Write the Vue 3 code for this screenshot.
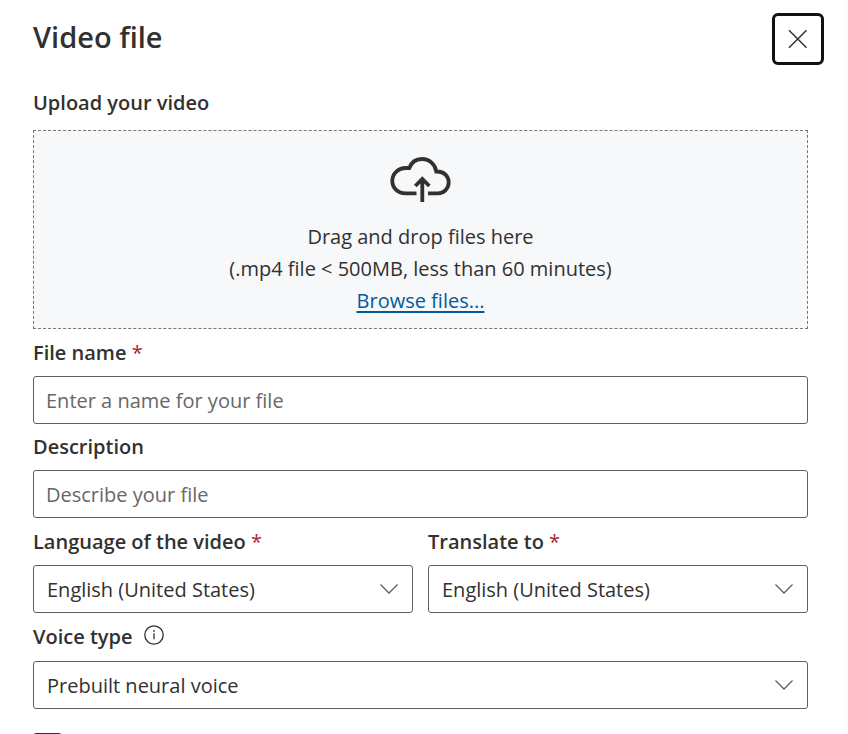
<script setup>
import { ref } from 'vue'

const languages = ['English (United States)', 'English (United Kingdom)', 'German (Germany)', 'Spanish (Spain)']
const voices = ['Prebuilt neural voice', 'Personal voice']

const fileName = ref('')
const description = ref('')
const sourceLanguage = ref(languages[0])
const targetLanguage = ref(languages[0])
const voiceType = ref(voices[0])
const accepted = ref(false)
</script>

<template>
  <main class="panel">
    <header class="header">
      <h1 class="title">Video file</h1>
      <button class="close" type="button" aria-label="Close">
        <svg width="20" height="20" viewBox="0 0 20 20" aria-hidden="true">
          <path d="M1 1.200l17.500 17.500M18.500 1.200l-17.500 17.500" />
        </svg>
      </button>
    </header>

    <form class="form" @submit.prevent>
      <h2 class="label upload-label">Upload your video</h2>
      <section class="dropzone">
        <svg class="cloud" width="62" height="48" viewBox="0 0 62 48" aria-hidden="true">
          <path d="M26.500 38.300H15.500C8 38.300 2.300 33 2.300 26C2.300 18.500 8.500 13 16 13H19.300C21.500 7 26.500 4 32 4C39.500 4 45.300 9.300 46.300 16.500H47.500C54 16.500 58.700 21.300 58.700 27.300C58.700 33.500 54 38.300 48 38.300H38" />
          <path d="M32.300 47V23M25.300 31L32.300 24L39.300 31" />
        </svg>
        <p>Drag and drop files here</p>
        <p>(.mp4 file &lt; 500MB, less than 60 minutes)</p>
        <p><a href="#">Browse files...</a></p>
      </section>

      <div class="field">
        <label class="label" for="file-name">File name <span class="required">*</span></label>
        <input id="file-name" v-model="fileName" class="control" type="text" placeholder="Enter a name for your file" />
      </div>

      <div class="field">
        <label class="label compact" for="description">Description</label>
        <input id="description" v-model="description" class="control" type="text" placeholder="Describe your file" />
      </div>

      <div class="row">
        <div class="field">
          <label class="label" for="source">Language of the video <span class="required">*</span></label>
          <div class="picker">
            <select id="source" v-model="sourceLanguage" class="control">
              <option v-for="language in languages" :key="language">{{ language }}</option>
            </select>
            <svg class="chevron" width="20" height="12" viewBox="0 0 20 12" aria-hidden="true"><path d="M1.500 1.500L10 10L18.500 1.500" /></svg>
          </div>
        </div>
        <div class="field">
          <label class="label" for="target">Translate to <span class="required">*</span></label>
          <div class="picker">
            <select id="target" v-model="targetLanguage" class="control">
              <option v-for="language in languages" :key="language">{{ language }}</option>
            </select>
            <svg class="chevron" width="20" height="12" viewBox="0 0 20 12" aria-hidden="true"><path d="M1.500 1.500L10 10L18.500 1.500" /></svg>
          </div>
        </div>
      </div>

      <div class="field">
        <div class="label-line">
          <label class="label" for="voice">Voice type</label>
          <svg class="info" width="20" height="20" viewBox="0 0 20 20" role="img" aria-label="Information">
            <circle class="ring" cx="10" cy="10" r="9.200" />
            <path class="stem" d="M10 8.300V14.300" />
            <circle class="dot" cx="10" cy="5.900" r="0.900" />
          </svg>
        </div>
        <div class="picker">
          <select id="voice" v-model="voiceType" class="control">
            <option v-for="voice in voices" :key="voice">{{ voice }}</option>
          </select>
          <svg class="chevron" width="20" height="12" viewBox="0 0 20 12" aria-hidden="true"><path d="M1.500 1.500L10 10L18.500 1.500" /></svg>
        </div>
      </div>

      <input v-model="accepted" class="checkbox" type="checkbox" aria-label="Accept" />
    </form>
  </main>
</template>

<style>
body {
  background: #fff;
}
</style>

<style scoped>
.panel {
  box-sizing: border-box;
  height: 100vh;
  overflow: hidden;
  padding: 13px 36px 0 33px;
  border-right: 4px solid #fcfcfc;
  color: #323130;
  font-family: "Open Sans", "Noto Sans", sans-serif;
  font-size: 20px;
  line-height: 32px;
}

.header {
  display: flex;
  justify-content: space-between;
  align-items: flex-start;
  margin-right: -16px;
}

.title {
  margin: 0;
  font-size: 29px;
  font-weight: 600;
  line-height: 48px;
}

.close {
  display: grid;
  place-items: center;
  width: 52px;
  height: 52px;
  padding: 0;
  border: 3px solid #111;
  border-radius: 6px;
  background: #fff;
}

.close path {
  fill: none;
  stroke: #323130;
  stroke-width: 1.5;
}

.form {
  display: flex;
  flex-direction: column;
  padding-top: 18px;
}

.label {
  display: block;
  margin: 0;
  font-size: 20px;
  font-weight: 600;
  line-height: 47px;
}

.compact {
  line-height: 46px;
}

.upload-label {
  padding-bottom: 8px;
  line-height: 39px;
}

.required {
  color: #a4262c;
  font-weight: 400;
}

.dropzone {
  display: flex;
  flex-direction: column;
  align-items: center;
  padding: 24px 0 11px;
  border: 1px dashed #797775;
  background: #f7f8fa;
}

.dropzone p {
  margin: 0;
}

.dropzone a {
  color: #005a9e;
  text-decoration: underline;
  text-decoration-thickness: 2px;
  text-underline-offset: 3px;
}

.cloud {
  margin-bottom: 18px;
}

.cloud path {
  fill: none;
  stroke: #323130;
  stroke-width: 3.8;
}

.field {
  min-width: 0;
}

.control {
  box-sizing: border-box;
  display: block;
  width: 100%;
  height: 48px;
  margin: 0;
  padding: 0 12px;
  border: 1px solid #605e5c;
  border-radius: 3px;
  background: #fff;
  color: #323130;
  font: inherit;
  appearance: none;
}

select.control {
  padding: 1px 12px 0 13px;
}

.control::placeholder {
  color: #696765;
  opacity: 1;
}

.row {
  display: grid;
  grid-template-columns: 1fr 1fr;
  gap: 15px;
}

.picker {
  display: grid;
  align-items: center;
}

.picker > * {
  grid-area: 1 / 1;
}

.chevron {
  justify-self: end;
  margin-right: 14px;
  pointer-events: none;
}

.chevron path {
  fill: none;
  stroke: #605e5c;
  stroke-width: 1.3;
}

.label-line {
  display: flex;
  align-items: center;
  gap: 12px;
  padding-bottom: 1px;
}

.info {
  margin-bottom: 4px;
}

.ring,
.stem {
  fill: none;
  stroke: #323130;
  stroke-width: 1.3;
}

.dot {
  fill: #323130;
}

.checkbox {
  flex: none;
  width: 29px;
  height: 29px;
  margin: 24px 0 0;
  border: 1px solid #323130;
  border-radius: 3px;
  appearance: none;
}
</style>
